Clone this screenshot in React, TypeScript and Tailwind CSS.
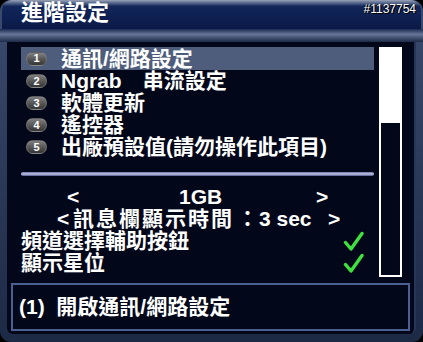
import { type ReactNode } from 'react';

const font = { fontFamily: '"Liberation Sans", "Noto Sans CJK TC", sans-serif' };

const menu = [
  '\u901a\u8a0a/\u7db2\u8def\u8a2d\u5b9a',
  'Ngrab\u3000\u4e32\u6d41\u8a2d\u5b9a',
  '\u8edf\u9ad4\u66f4\u65b0',
  '\u9059\u63a7\u5668',
  '\u51fa\u5ee0\u9810\u8a2d\u503c(\u8acb\u52ff\u64cd\u4f5c\u6b64\u9805\u76ee)',
];

const Check = () => (
  <svg width="21" height="21" viewBox="0 0 21 21" className="ml-auto mr-[10px] shrink-0">
    <path
      d="M2.5 11.5 L8 18 L19 2.5"
      fill="none"
      stroke="#3fe03f"
      strokeWidth="3.4"
      strokeLinecap="round"
      strokeLinejoin="round"
    />
  </svg>
);

const Row = ({ children }: { children: ReactNode }) => (
  <div className="h-[22px] flex items-center text-[21px] leading-[22px] whitespace-nowrap">{children}</div>
);

export default function App() {
  return (
    <div className="w-[423px] h-[342px] bg-black overflow-hidden text-white font-bold" style={font}>
      <div className="h-full rounded-[11px] bg-gradient-to-b from-[#3b4b6e] to-[#1d2a46] flex flex-col">
        {/* Title bar */}
        <div className="h-[29px] mx-[2px] rounded-t-[10px] bg-gradient-to-b from-[#9aa3b6] via-[#12265a] via-[22%] to-[#0a1a48] flex items-start justify-between pl-[19px] pr-[5px]">
          <span className="text-[22px] leading-[26px]">{'\u9032\u968e\u8a2d\u5b9a'}</span>
          <span
            className="text-[12px] leading-[14px] mt-[2px] font-normal"
            style={{ textShadow: '1px 1px 0 #000, -1px 0 0 #000' }}
          >
            #1137754
          </span>
        </div>
        <div className="h-[13px] bg-gradient-to-b from-[#1b2a4e] via-[#67779a] via-[40%] to-[#1e2b48]" />

        {/* Main panel */}
        <div className="flex-1 mx-[7px] mb-[8px] bg-[#03071a] rounded-b-[6px] border-r-2 border-[#26365a] flex flex-col pt-[5px]">
          <div className="flex pl-[14px]">
            <div className="w-[353px] flex flex-col">
              {menu.map((label, i) => (
                <div
                  key={i}
                  className={`flex items-center text-[21px] whitespace-nowrap ${
                    i === 0 ? 'h-[23px] bg-[#4e5d7c]' : 'h-[22px]'
                  }`}
                >
                  <span className="ml-[5px] w-[21px] h-[14px] shrink-0 rounded-full bg-gradient-to-b from-[#7e7e7e] to-[#353535] border border-[#9a9a9a]/40 flex items-center justify-center text-[11px] leading-none">
                    {i + 1}
                  </span>
                  <span className="ml-[14px] leading-[22px]">{label}</span>
                </div>
              ))}

              <div className="mt-[14px] h-[4px] rounded-full bg-gradient-to-b from-[#6c75a8] via-[#c4c8e6] to-[#4c558a]" />

              <div className="mt-[10px] flex flex-col">
                <Row>
                  <span className="ml-[46px] w-[112px]">&lt;</span>
                  <span className="w-[137px]">1GB</span>
                  <span>&gt;</span>
                </Row>
                <Row>
                  <span className="ml-[36px] w-[16px]">&lt;</span>
                  <span className="w-[164px] tracking-[2px]">{'\u8a0a\u606f\u6b04\u986f\u793a\u6642\u9593'}</span>
                  <span className="w-[22px]">{'\uff1a'}</span>
                  <span className="w-[69px]">3 sec</span>
                  <span>&gt;</span>
                </Row>
                <Row>
                  <span>{'\u983b\u9053\u9078\u64c7\u8f14\u52a9\u6309\u9215'}</span>
                  <Check />
                </Row>
                <Row>
                  <span>{'\u986f\u793a\u661f\u4f4d'}</span>
                  <Check />
                </Row>
              </div>
            </div>

            {/* Scrollbar */}
            <div className="ml-[5px] w-[23px] h-[230px] border-2 border-white flex flex-col">
              <div className="h-[74px] bg-white" />
            </div>
          </div>

          {/* Help box */}
          <div className="mt-[6px] mx-[4px] h-[48px] border-2 border-[#4b5f90] flex items-center pl-[6px] text-[21px] whitespace-nowrap">
            (1)&nbsp;&nbsp;{'\u958b\u555f\u901a\u8a0a/\u7db2\u8def\u8a2d\u5b9a'}
          </div>
        </div>
      </div>
    </div>
  );
}
